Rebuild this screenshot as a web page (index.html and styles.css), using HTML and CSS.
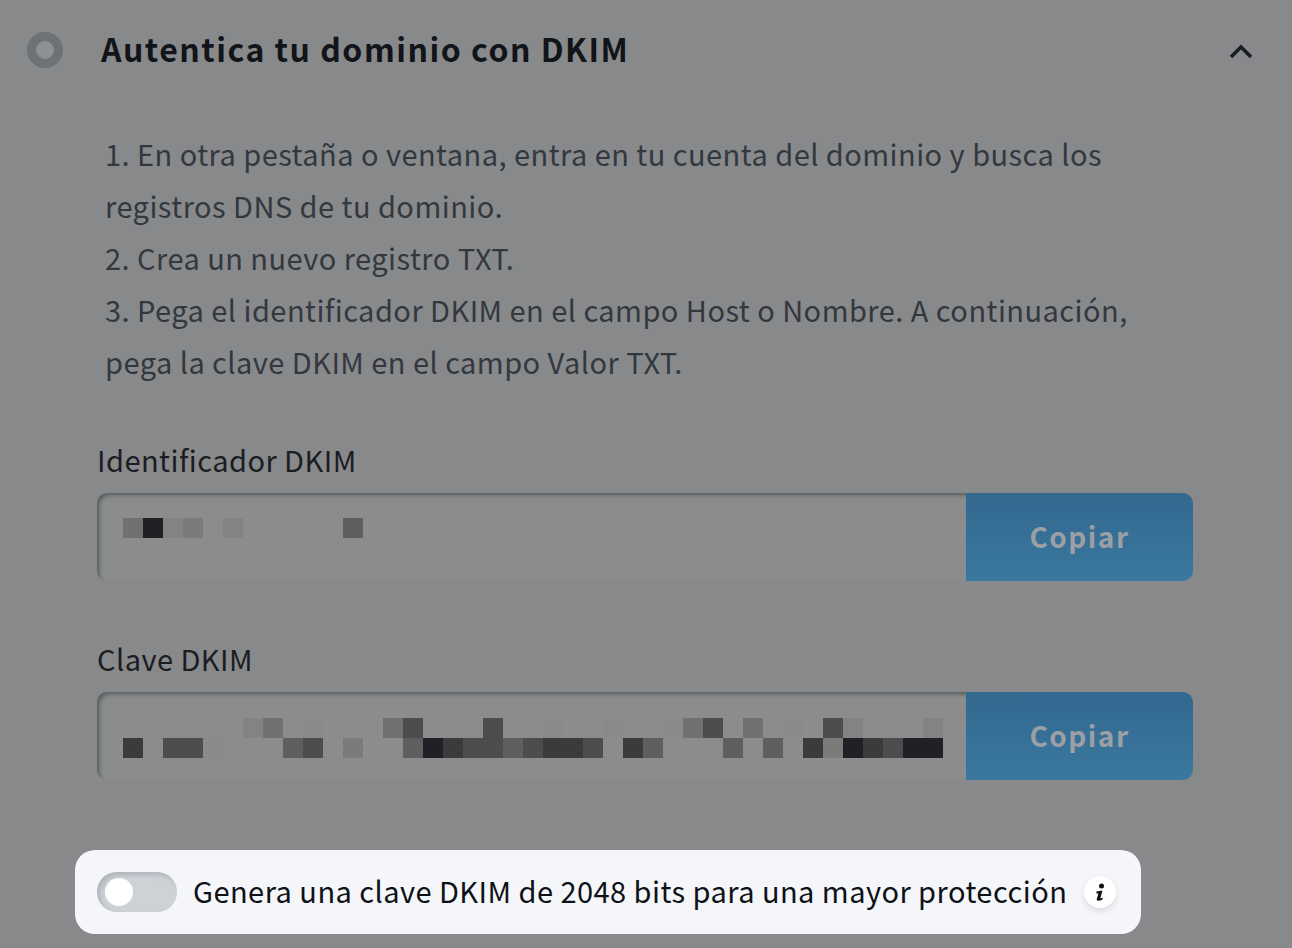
FILE: index.html
```html
<!DOCTYPE html>
<html lang="es">
<head>
<meta charset="utf-8">
<title>Autentica tu dominio con DKIM</title>
<link rel="stylesheet" href="styles.css">
</head>
<body>
<main class="panel">
  <header class="head">
    <span class="ring"></span>
    <h1 class="title">Autentica tu dominio con DKIM</h1>
    <svg class="chev" viewBox="0 0 24 15" width="24" height="15"><path d="M2 13 L12 3 L22 13" fill="none" stroke="#1a1d22" stroke-width="3.6"/></svg>
  </header>
  <p class="steps">1. En otra pestaña o ventana, entra en tu cuenta del dominio y busca los<br>registros DNS de tu dominio.<br>2. Crea un nuevo registro TXT.<br>3. Pega el identificador DKIM en el campo Host o Nombre. A continuación,<br>pega la clave DKIM en el campo Valor TXT.</p>

  <section class="field first">
    <div class="label">Identificador DKIM</div>
    <div class="row">
      <div class="input">
        <div class="px"><i class="s3"></i><i class="s7"></i><i class="s1"></i><i class="s2"></i><i></i><i class="s1"></i><i></i><i></i><i></i><i></i><i></i><i class="s4"></i></div>
      </div>
      <button class="copy">Copiar</button>
    </div>
  </section>

  <section class="field second">
    <div class="label">Clave DKIM</div>
    <div class="row">
      <div class="input tall">
        <div class="px"><i></i><i></i><i></i><i></i><i></i><i></i><i class="s1"></i><i class="s3"></i><i></i><i class="s0"></i><i></i><i></i><i></i><i class="s3"></i><i class="s5"></i><i></i><i></i><i></i><i class="s5"></i><i></i><i></i><i class="s0"></i><i></i><i></i><i class="s0"></i><i></i><i></i><i class="s0"></i><i class="s3"></i><i class="s5"></i><i></i><i class="s3"></i><i></i><i class="s0"></i><i></i><i class="s5"></i><i class="s1"></i><i></i><i></i><i></i><i class="s1"></i></div>
        <div class="px"><i class="s6"></i><i></i><i class="s5"></i><i class="s5"></i><i class="s0"></i><i></i><i></i><i></i><i class="s4"></i><i class="s5"></i><i></i><i class="s2"></i><i></i><i></i><i class="s4"></i><i class="s7"></i><i class="s6"></i><i class="s5"></i><i class="s5"></i><i class="s4"></i><i class="s5"></i><i class="s6"></i><i class="s6"></i><i class="s5"></i><i></i><i class="s6"></i><i class="s4"></i><i></i><i></i><i></i><i class="s4"></i><i></i><i class="s4"></i><i></i><i class="s6"></i><i class="s2"></i><i class="s7"></i><i class="s6"></i><i class="s5"></i><i class="s7"></i><i class="s7"></i></div>
      </div>
      <button class="copy">Copiar</button>
    </div>
  </section>

  <div class="option">
    <span class="toggle"><span class="knob"></span></span>
    <span class="option-text">Genera una clave DKIM de 2048 bits para una mayor protección</span>
    <span class="info">
      <svg viewBox="0 0 32 32" width="32" height="32"><circle cx="17.5" cy="10" r="2.5" fill="#111"/><path d="M12.5 15.5 L18.5 14.5 L16.3 22.5 L18.6 21.5 L18.6 23.5 Q15.5 25 13.7 24.8 Q12.3 24.5 12.8 22.8 L14.4 17.4 L12.4 17.6 Z" fill="#111"/></svg>
    </span>
  </div>
</main>
</body>
</html>
```
FILE: styles.css
```css
* { box-sizing: border-box; }
html, body { margin: 0; height: 100%; }
body {
  background: #88898b;
  overflow: hidden;
  font-family: "Noto Sans CJK JP", "Noto Sans", sans-serif;
}
.panel { width: 1292px; height: 948px; overflow: hidden; }

.head {
  display: flex;
  align-items: center;
  height: 36px;
  margin-top: 32px;
  padding-left: 27px;
  padding-right: 39px;
}
.ring {
  width: 36px;
  height: 36px;
  border-radius: 50%;
  border: 9px solid #6d7277;
  background: #8f9092;
  flex: none;
}
.title {
  margin: 0 0 4px 38px;
  flex: 1;
  font-size: 32px;
  line-height: 36px;
  font-weight: 700;
  letter-spacing: 1.5px;
  color: #111419;
}
.chev { flex: none; margin-top: 2px; }

.steps {
  margin: 59px 0 0 105px;
  width: 1100px;
  font-size: 29px;
  line-height: 52px;
  font-weight: 400;
  letter-spacing: 0.46px;
  color: #33383e;
}

.field { margin-left: 97px; width: 1096px; }
.field.first { margin-top: 52px; }
.field.second { margin-top: 57px; }
.label {
  font-size: 29px;
  line-height: 40px;
  letter-spacing: 0.46px;
  color: #1a1d22;
  margin-bottom: 14px;
}
.row { display: flex; height: 88px; }
.input {
  width: 869px;
  height: 88px;
  padding: 25px 0 0 26px;
  background: #8b8c8c;
  border-radius: 10px 0 0 10px;
  box-shadow: inset 3px 3px 4px -1px #565a5d;
}
.input.tall { padding-top: 26px; }
.px { display: flex; height: 20px; }
.px i { display: block; width: 20px; height: 20px; flex: none; }
.s0 { background: #898a8a; }
.s1 { background: #828383; }
.s2 { background: #7a7b7b; }
.s3 { background: #707171; }
.s4 { background: #5e6060; }
.s5 { background: #4b4d4e; }
.s6 { background: #393b3d; }
.s7 { background: #1f2126; }

.copy {
  width: 227px;
  height: 88px;
  border: 0;
  padding: 0 0 2px;
  border-radius: 0 10px 10px 0;
  background: linear-gradient(180deg, #33688f 0%, #3a789e 100%);
  color: #9c9fa4;
  font-family: inherit;
  font-size: 28px;
  font-weight: 700;
  letter-spacing: 1.5px;
}

.option {
  display: flex;
  align-items: center;
  width: 1066px;
  height: 84px;
  margin: 70px 0 0 75px;
  padding-left: 22px;
  background: #f5f6fa;
  border-radius: 20px;
}
.toggle {
  display: flex;
  align-items: center;
  flex: none;
  width: 80px;
  height: 40px;
  padding-left: 8px;
  border-radius: 20px;
  background: #ced1d6;
  box-shadow: inset 3px 3px 5px #b0b4ba;
}
.knob { width: 28px; height: 28px; border-radius: 50%; background: #fff; }
.option-text {
  margin: 0 0 4px 16px;
  font-size: 29px;
  line-height: 40px;
  letter-spacing: 0.46px;
  color: #0e1116;
  white-space: nowrap;
}
.info {
  flex: none;
  width: 32px;
  height: 32px;
  margin-left: 17px;
  border-radius: 50%;
  background: #fff;
  box-shadow: 0 3px 6px rgba(30, 40, 60, 0.12);
}
.info svg { display: block; }
```
